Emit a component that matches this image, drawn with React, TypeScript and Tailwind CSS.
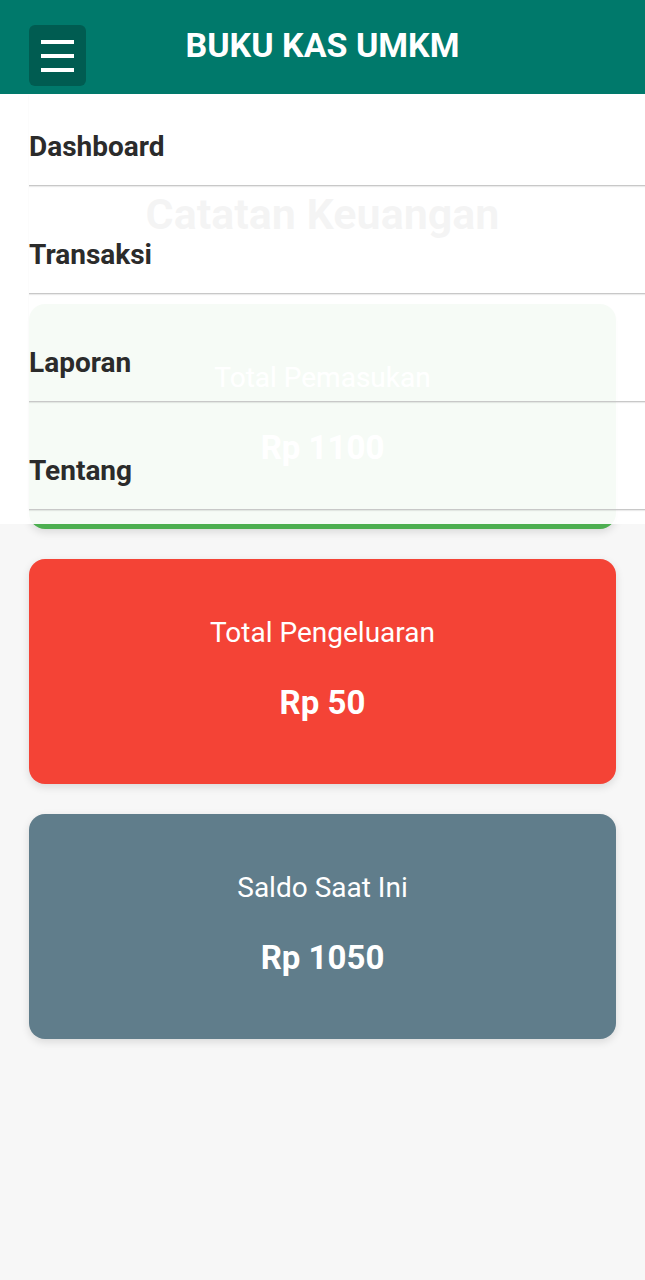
import React from 'react';

export default function App() {
  const menu = ['Dashboard', 'Transaksi', 'Laporan', 'Tentang'];

  const cards = [
    { label: 'Total Pemasukan', value: 'Rp 1100', bg: 'bg-[#4caf50]' },
    { label: 'Total Pengeluaran', value: 'Rp 50', bg: 'bg-[#f44336]' },
    { label: 'Saldo Saat Ini', value: 'Rp 1050', bg: 'bg-[#607d8b]' }
  ];

  return (
    <div
      className="relative min-h-[1280px] bg-[#f7f7f7]"
      style={{ fontFamily: 'Roboto, "Liberation Sans", sans-serif' }}
    >
      {/* Header */}
      <header className="relative z-20 flex h-[94px] items-start bg-[#00796b] px-[29px]">
        <button className="mt-[25px] flex h-[61px] w-[57px] flex-col items-center justify-center gap-[10px] rounded-[6px] bg-[#005c51]">
          <span className="block h-[4px] w-[33px] bg-white" />
          <span className="block h-[4px] w-[33px] bg-white" />
          <span className="block h-[4px] w-[33px] bg-white" />
        </button>
        <h1 className="mt-[25px] flex-1 pr-[57px] text-center text-[34px] font-bold leading-[40px] text-white">
          BUKU KAS UMKM
        </h1>
      </header>

      {/* Content */}
      <main className="px-[29px]">
        <h2 className="pt-[94px] pb-[64px] text-center text-[43px] font-bold leading-[52px] text-[#333]">
          Catatan Keuangan
        </h2>
        <div className="flex flex-col gap-[30px]">
          {cards.map((card, index) => (
            <div
              key={index}
              className={`h-[225px] rounded-[16px] ${card.bg} pt-[56px] text-center text-white shadow-[0_3px_8px_rgba(0,0,0,0.12)]`}
            >
              <p className="text-[28px] leading-[36px]">{card.label}</p>
              <p className="mt-[32px] text-[33px] font-bold leading-[40px]">{card.value}</p>
            </div>
          ))}
        </div>
      </main>

      {/* Dropdown menu */}
      <nav className="absolute left-0 right-0 top-[94px] z-10 bg-white/95 pb-[14px]">
        {menu.map((item, index) => (
          <div
            key={item}
            className={`ml-[29px] border-b border-[#c8c8c8] pb-[22px] text-[28px] font-bold leading-[32px] text-[#2b2b2b] shadow-[0_1px_1px_rgba(0,0,0,0.08)] ${
              index === 0 ? 'pt-[37px]' : 'pt-[53px]'
            }`}
          >
            {item}
          </div>
        ))}
      </nav>
    </div>
  );
}
